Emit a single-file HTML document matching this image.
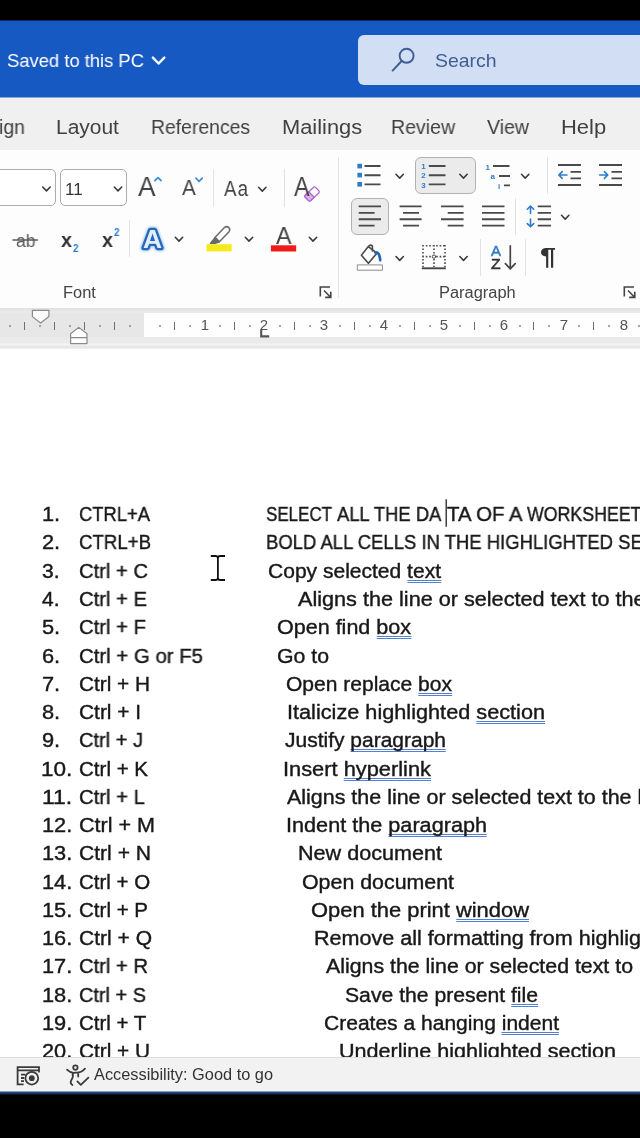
<!DOCTYPE html>
<html lang="en">
<head>
<meta charset="utf-8">
<title>Word shortcuts</title>
<style>
html,body{margin:0;padding:0;background:#000;}
body{width:640px;height:1138px;position:relative;overflow:hidden;font-family:"Liberation Sans",sans-serif;}
.abs{position:absolute;}
.t{position:absolute;white-space:nowrap;transform-origin:0 0;will-change:transform;line-height:1em;font-family:"Liberation Sans",sans-serif;}
#titlebar{position:absolute;left:0;top:20px;width:640px;height:78px;background:#1759c3;}
#search{position:absolute;left:358px;top:35px;width:300px;height:50px;border-radius:6px;background:#d2def4;}
#tabrow{position:absolute;left:0;top:97px;width:640px;height:53px;background:#f0f0f0;}
#ribbon{position:absolute;left:0;top:150px;width:640px;height:158px;background:#fdfdfd;}
#rulerband{position:absolute;left:0;top:308px;width:640px;height:41px;background:linear-gradient(#e0e0e0 0,#eaeaea 4px,#eaeaea 35px,#f4f4f4 36px,#f4f4f4 37px,#e6e6e6 38px,#e8e8e8 40px,#f5f5f5 41px);}
#rulergrey{position:absolute;left:0;top:313px;width:145px;height:24px;background:#e7e7e7;}
#rulerwhite{position:absolute;left:144px;top:313px;width:500px;height:24px;background:#fefefe;}
#doc{position:absolute;left:0;top:349px;width:640px;height:708px;background:#fff;overflow:hidden;}
#doc .t{margin-top:-349px;}
#status{position:absolute;left:0;top:1057px;width:640px;height:34px;background:#f2f2f2;border-top:1px solid #dedede;box-sizing:border-box;}
#statusline{position:absolute;left:0;top:1091px;width:640px;height:4px;background:linear-gradient(#c9d3e6 0,#2a4c8c 30%,#14284f 70%,#050a14);}
u{text-decoration:none;background:linear-gradient(#5580cf,#5580cf) 0 100%/100% 1px no-repeat,linear-gradient(#5580cf,#5580cf) 0 calc(100% - 2px)/100% 1px no-repeat;padding-bottom:1px;}
.sep{position:absolute;width:1px;background:#e2e2e2;}
.box{position:absolute;box-sizing:border-box;border:1px solid #ababab;border-radius:5px;background:#fff;}
.sel{position:absolute;box-sizing:border-box;border:1px solid #b2b2b2;border-radius:6px;background:#ebebeb;}
.rn{position:absolute;top:316px;width:20px;text-align:center;font-size:15px;line-height:18px;color:#555;}
.tk{position:absolute;top:322px;width:1px;height:8px;background:#707070;}
.dt{position:absolute;top:325px;width:2px;height:2px;background:#8a8a8a;border-radius:1px;}
svg{position:absolute;overflow:visible;will-change:transform;}
.rn{will-change:transform;}
</style>
</head>
<body>
<div id="titlebar"></div>
<div id="search"></div>
<div id="tabrow"></div>
<div class="abs" style="left:0;top:20px;width:640px;height:1px;background:#0b2c62"></div>
<div class="abs" style="left:0;top:97px;width:640px;height:1px;background:#86a8dc"></div>
<div id="ribbon"></div>
<div id="rulerband"></div>
<div id="rulergrey"></div>
<div id="rulerwhite"></div>
<i class="dt" style="left:9.3px"></i>
<i class="tk" style="left:24.3px"></i>
<i class="dt" style="left:39.3px"></i>
<i class="tk" style="left:54.2px"></i>
<i class="dt" style="left:69.2px"></i>
<i class="tk" style="left:84.2px"></i>
<i class="dt" style="left:99.2px"></i>
<i class="tk" style="left:114.1px"></i>
<i class="dt" style="left:129.1px"></i>
<i class="dt" style="left:159.1px"></i>
<i class="tk" style="left:174.0px"></i>
<i class="dt" style="left:189.0px"></i>
<span class="rn" style="left:194.5px">1</span>
<i class="dt" style="left:219.0px"></i>
<i class="tk" style="left:233.9px"></i>
<i class="dt" style="left:248.9px"></i>
<span class="rn" style="left:254.4px">2</span>
<i class="dt" style="left:278.9px"></i>
<i class="tk" style="left:293.9px"></i>
<i class="dt" style="left:308.8px"></i>
<span class="rn" style="left:314.3px">3</span>
<i class="dt" style="left:338.8px"></i>
<i class="tk" style="left:353.8px"></i>
<i class="dt" style="left:368.7px"></i>
<span class="rn" style="left:374.2px">4</span>
<i class="dt" style="left:398.7px"></i>
<i class="tk" style="left:413.6px"></i>
<i class="dt" style="left:428.6px"></i>
<span class="rn" style="left:434.1px">5</span>
<i class="dt" style="left:458.6px"></i>
<i class="tk" style="left:473.5px"></i>
<i class="dt" style="left:488.5px"></i>
<span class="rn" style="left:494.0px">6</span>
<i class="dt" style="left:518.5px"></i>
<i class="tk" style="left:533.4px"></i>
<i class="dt" style="left:548.4px"></i>
<span class="rn" style="left:553.9px">7</span>
<i class="dt" style="left:578.4px"></i>
<i class="tk" style="left:593.4px"></i>
<i class="dt" style="left:608.3px"></i>
<span class="rn" style="left:613.8px">8</span>
<i class="dt" style="left:638.3px"></i>
<div id="doc">
<span id="n0" class="t" style="left:41.66px;top:504.15px;font-size:20.5px;color:#181818;transform:scaleX(1.0633);-webkit-text-stroke:0.4px #181818;">1.</span>
<span id="k0" class="t" style="left:78.99px;top:504.15px;font-size:20.5px;color:#181818;transform:scaleX(0.8968);-webkit-text-stroke:0.4px #181818;">CTRL+A</span>
<span id="d0s0" class="t" style="left:265.97px;top:504.15px;font-size:20.5px;color:#181818;transform:scaleX(0.8278);-webkit-text-stroke:0.4px #181818;">SELECT</span>
<span id="d0s1" class="t" style="left:337.02px;top:504.15px;font-size:20.5px;color:#181818;transform:scaleX(0.8983);-webkit-text-stroke:0.4px #181818;">ALL THE DA</span>
<span id="d0s2" class="t" style="left:447.48px;top:504.15px;font-size:20.5px;color:#181818;transform:scaleX(0.9946);-webkit-text-stroke:0.4px #181818;">TA OF A</span>
<span id="d0s3" class="t" style="left:527.00px;top:504.15px;font-size:20.5px;color:#181818;transform:scaleX(0.8666);-webkit-text-stroke:0.4px #181818;">WORKSHEET</span>
<span id="n1" class="t" style="left:41.66px;top:532.42px;font-size:20.5px;color:#181818;transform:scaleX(1.0633);-webkit-text-stroke:0.4px #181818;">2.</span>
<span id="k1" class="t" style="left:78.97px;top:532.42px;font-size:20.5px;color:#181818;transform:scaleX(0.9100);-webkit-text-stroke:0.4px #181818;">CTRL+B</span>
<span id="d1" class="t" style="left:266.00px;top:532.42px;font-size:20.5px;color:#181818;transform:scaleX(0.9011);-webkit-text-stroke:0.4px #181818;">BOLD ALL CELLS IN THE HIGHLIGHTED SECTION</span>
<span id="n2" class="t" style="left:41.79px;top:560.69px;font-size:20.5px;color:#181818;transform:scaleX(1.0247);-webkit-text-stroke:0.4px #181818;">3.</span>
<span id="k2" class="t" style="left:78.98px;top:560.69px;font-size:20.5px;color:#181818;transform:scaleX(0.9855);-webkit-text-stroke:0.4px #181818;">Ctrl + C</span>
<span id="d2" class="t" style="left:268.00px;top:560.69px;font-size:20.5px;color:#181818;transform:scaleX(1.0258);-webkit-text-stroke:0.4px #181818;">Copy selected <u>text</u></span>
<span id="n3" class="t" style="left:41.79px;top:588.96px;font-size:20.5px;color:#181818;transform:scaleX(1.0247);-webkit-text-stroke:0.4px #181818;">4.</span>
<span id="k3" class="t" style="left:78.97px;top:588.96px;font-size:20.5px;color:#181818;transform:scaleX(0.9875);-webkit-text-stroke:0.4px #181818;">Ctrl + E</span>
<span id="d3" class="t" style="left:298.00px;top:588.96px;font-size:20.5px;color:#181818;transform:scaleX(1.0554);-webkit-text-stroke:0.4px #181818;">Aligns the line or selected text to the center</span>
<span id="n4" class="t" style="left:41.66px;top:617.23px;font-size:20.5px;color:#181818;transform:scaleX(1.0633);-webkit-text-stroke:0.4px #181818;">5.</span>
<span id="k4" class="t" style="left:78.98px;top:617.23px;font-size:20.5px;color:#181818;transform:scaleX(0.9889);-webkit-text-stroke:0.4px #181818;">Ctrl + F</span>
<span id="d4" class="t" style="left:276.98px;top:617.23px;font-size:20.5px;color:#181818;transform:scaleX(1.0500);-webkit-text-stroke:0.4px #181818;">Open find <u>box</u></span>
<span id="n5" class="t" style="left:41.66px;top:645.50px;font-size:20.5px;color:#181818;transform:scaleX(1.0633);-webkit-text-stroke:0.4px #181818;">6.</span>
<span id="k5" class="t" style="left:78.99px;top:645.50px;font-size:20.5px;color:#181818;transform:scaleX(0.9943);-webkit-text-stroke:0.4px #181818;">Ctrl + G or F5</span>
<span id="d5" class="t" style="left:276.97px;top:645.50px;font-size:20.5px;color:#181818;transform:scaleX(1.0374);-webkit-text-stroke:0.4px #181818;">Go to</span>
<span id="n6" class="t" style="left:41.66px;top:673.77px;font-size:20.5px;color:#181818;transform:scaleX(1.0633);-webkit-text-stroke:0.4px #181818;">7.</span>
<span id="k6" class="t" style="left:78.96px;top:673.77px;font-size:20.5px;color:#181818;transform:scaleX(1.0144);-webkit-text-stroke:0.4px #181818;">Ctrl + H</span>
<span id="d6" class="t" style="left:285.99px;top:673.77px;font-size:20.5px;color:#181818;transform:scaleX(1.0257);-webkit-text-stroke:0.4px #181818;">Open replace <u>box</u></span>
<span id="n7" class="t" style="left:41.66px;top:702.04px;font-size:20.5px;color:#181818;transform:scaleX(1.0633);-webkit-text-stroke:0.4px #181818;">8.</span>
<span id="k7" class="t" style="left:78.97px;top:702.04px;font-size:20.5px;color:#181818;transform:scaleX(1.0183);-webkit-text-stroke:0.4px #181818;">Ctrl + I</span>
<span id="d7" class="t" style="left:286.97px;top:702.04px;font-size:20.5px;color:#181818;transform:scaleX(1.0580);-webkit-text-stroke:0.4px #181818;">Italicize highlighted <u>section</u></span>
<span id="n8" class="t" style="left:41.66px;top:730.31px;font-size:20.5px;color:#181818;transform:scaleX(1.0633);-webkit-text-stroke:0.4px #181818;">9.</span>
<span id="k8" class="t" style="left:78.97px;top:730.31px;font-size:20.5px;color:#181818;transform:scaleX(0.9782);-webkit-text-stroke:0.4px #181818;">Ctrl + J</span>
<span id="d8" class="t" style="left:285.00px;top:730.31px;font-size:20.5px;color:#181818;transform:scaleX(1.0238);-webkit-text-stroke:0.4px #181818;">Justify <u>paragraph</u></span>
<span id="n9" class="t" style="left:40.57px;top:758.58px;font-size:20.5px;color:#181818;transform:scaleX(1.1012);-webkit-text-stroke:0.4px #181818;">10.</span>
<span id="k9" class="t" style="left:78.97px;top:758.58px;font-size:20.5px;color:#181818;transform:scaleX(1.0020);-webkit-text-stroke:0.4px #181818;">Ctrl + K</span>
<span id="d9" class="t" style="left:282.97px;top:758.58px;font-size:20.5px;color:#181818;transform:scaleX(1.0648);-webkit-text-stroke:0.4px #181818;">Insert <u>hyperlink</u></span>
<span id="n10" class="t" style="left:41.74px;top:786.85px;font-size:20.5px;color:#181818;transform:scaleX(1.1217);-webkit-text-stroke:0.4px #181818;">11.</span>
<span id="k10" class="t" style="left:78.98px;top:786.85px;font-size:20.5px;color:#181818;transform:scaleX(0.9904);-webkit-text-stroke:0.4px #181818;">Ctrl + L</span>
<span id="d10" class="t" style="left:287.00px;top:786.85px;font-size:20.5px;color:#181818;transform:scaleX(1.0460);-webkit-text-stroke:0.4px #181818;">Aligns the line or selected text to the left</span>
<span id="n11" class="t" style="left:41.74px;top:815.12px;font-size:20.5px;color:#181818;transform:scaleX(1.0619);-webkit-text-stroke:0.4px #181818;">12.</span>
<span id="k11" class="t" style="left:78.97px;top:815.12px;font-size:20.5px;color:#181818;transform:scaleX(1.0515);-webkit-text-stroke:0.4px #181818;">Ctrl + M</span>
<span id="d11" class="t" style="left:285.96px;top:815.12px;font-size:20.5px;color:#181818;transform:scaleX(1.0561);-webkit-text-stroke:0.4px #181818;">Indent the <u>paragraph</u></span>
<span id="n12" class="t" style="left:41.74px;top:843.39px;font-size:20.5px;color:#181818;transform:scaleX(1.0619);-webkit-text-stroke:0.4px #181818;">13.</span>
<span id="k12" class="t" style="left:78.96px;top:843.39px;font-size:20.5px;color:#181818;transform:scaleX(1.0287);-webkit-text-stroke:0.4px #181818;">Ctrl + N</span>
<span id="d12" class="t" style="left:297.99px;top:843.39px;font-size:20.5px;color:#181818;transform:scaleX(1.0532);-webkit-text-stroke:0.4px #181818;">New document</span>
<span id="n13" class="t" style="left:41.74px;top:871.66px;font-size:20.5px;color:#181818;transform:scaleX(1.0619);-webkit-text-stroke:0.4px #181818;">14.</span>
<span id="k13" class="t" style="left:78.99px;top:871.66px;font-size:20.5px;color:#181818;transform:scaleX(0.9973);-webkit-text-stroke:0.4px #181818;">Ctrl + O</span>
<span id="d13" class="t" style="left:302.00px;top:871.66px;font-size:20.5px;color:#181818;transform:scaleX(1.0422);-webkit-text-stroke:0.4px #181818;">Open document</span>
<span id="n14" class="t" style="left:41.74px;top:899.93px;font-size:20.5px;color:#181818;transform:scaleX(1.0619);-webkit-text-stroke:0.4px #181818;">15.</span>
<span id="k14" class="t" style="left:78.97px;top:899.93px;font-size:20.5px;color:#181818;transform:scaleX(1.0020);-webkit-text-stroke:0.4px #181818;">Ctrl + P</span>
<span id="d14" class="t" style="left:310.99px;top:899.93px;font-size:20.5px;color:#181818;transform:scaleX(1.0686);-webkit-text-stroke:0.4px #181818;">Open the print <u>window</u></span>
<span id="n15" class="t" style="left:41.74px;top:928.20px;font-size:20.5px;color:#181818;transform:scaleX(1.0619);-webkit-text-stroke:0.4px #181818;">16.</span>
<span id="k15" class="t" style="left:78.98px;top:928.20px;font-size:20.5px;color:#181818;transform:scaleX(1.0257);-webkit-text-stroke:0.4px #181818;">Ctrl + Q</span>
<span id="d15" class="t" style="left:314.00px;top:928.20px;font-size:20.5px;color:#181818;transform:scaleX(1.0514);-webkit-text-stroke:0.4px #181818;">Remove all formatting from highlighted</span>
<span id="n16" class="t" style="left:41.74px;top:956.47px;font-size:20.5px;color:#181818;transform:scaleX(1.0619);-webkit-text-stroke:0.4px #181818;">17.</span>
<span id="k16" class="t" style="left:78.98px;top:956.47px;font-size:20.5px;color:#181818;transform:scaleX(0.9855);-webkit-text-stroke:0.4px #181818;">Ctrl + R</span>
<span id="d16" class="t" style="left:326.00px;top:956.47px;font-size:20.5px;color:#181818;transform:scaleX(1.0402);-webkit-text-stroke:0.4px #181818;">Aligns the line or selected text to</span>
<span id="n17" class="t" style="left:41.74px;top:984.74px;font-size:20.5px;color:#181818;transform:scaleX(1.0619);-webkit-text-stroke:0.4px #181818;">18.</span>
<span id="k17" class="t" style="left:78.97px;top:984.74px;font-size:20.5px;color:#181818;transform:scaleX(0.9730);-webkit-text-stroke:0.4px #181818;">Ctrl + S</span>
<span id="d17" class="t" style="left:344.99px;top:984.74px;font-size:20.5px;color:#181818;transform:scaleX(1.0327);-webkit-text-stroke:0.4px #181818;">Save the present <u>file</u></span>
<span id="n18" class="t" style="left:41.74px;top:1013.01px;font-size:20.5px;color:#181818;transform:scaleX(1.0619);-webkit-text-stroke:0.4px #181818;">19.</span>
<span id="k18" class="t" style="left:78.98px;top:1013.01px;font-size:20.5px;color:#181818;transform:scaleX(0.9942);-webkit-text-stroke:0.4px #181818;">Ctrl + T</span>
<span id="d18" class="t" style="left:324.00px;top:1013.01px;font-size:20.5px;color:#181818;transform:scaleX(1.0258);-webkit-text-stroke:0.4px #181818;">Creates a hanging <u>indent</u></span>
<span id="n19" class="t" style="left:41.74px;top:1041.28px;font-size:20.5px;color:#181818;transform:scaleX(1.0619);-webkit-text-stroke:0.4px #181818;">20.</span>
<span id="k19" class="t" style="left:78.97px;top:1041.28px;font-size:20.5px;color:#181818;transform:scaleX(1.0142);-webkit-text-stroke:0.4px #181818;">Ctrl + U</span>
<span id="d19" class="t" style="left:338.99px;top:1041.28px;font-size:20.5px;color:#181818;transform:scaleX(1.0523);-webkit-text-stroke:0.4px #181818;">Underline highlighted section</span>
</div>
<div id="status"></div>
<div id="statusline"></div>
<div class="box" style="left:-10px;top:169px;width:66px;height:37px;"></div>
<div class="box" style="left:60px;top:169px;width:67px;height:37px;"></div>
<div class="sel" style="left:415px;top:156.5px;width:61px;height:37.5px;"></div>
<div class="sel" style="left:351px;top:197.5px;width:37.5px;height:37.5px;"></div>
<div class="sep" style="left:213px;top:169px;height:38px;"></div>
<div class="sep" style="left:284px;top:169px;height:38px;"></div>
<div class="sep" style="left:129px;top:220px;height:37px;"></div>
<div class="sep" style="left:338px;top:157px;height:141px;"></div>
<div class="sep" style="left:547px;top:157px;height:37px;"></div>
<div class="sep" style="left:515px;top:198px;height:37px;"></div>
<div class="sep" style="left:480px;top:239px;height:37px;"></div>
<div class="sep" style="left:525px;top:239px;height:37px;"></div>
<svg id="ov" width="640" height="1138" viewBox="0 0 640 1138" style="left:0;top:0;pointer-events:none" fill="none" stroke-linecap="round" stroke-linejoin="round">
<defs>
<path id="chv" d="M-3.7 -2 L0 1.9 L3.7 -2" stroke-width="1.55"/>
<path id="chvb" d="M-5.7 -3 L0 2.9 L5.7 -3" stroke-width="2.5"/>
</defs>
<!-- title bar -->
<use href="#chvb" x="158.6" y="60.6" stroke="#f2f7ff"/>
<g stroke="#3f5d93" stroke-width="1.9"><circle cx="406.6" cy="55.8" r="7"/><path d="M401.6 61 L392.6 70.6"/></g>
<!-- font row 1 -->
<g stroke="#3a3a3a">
<use href="#chv" x="46.5" y="189"/>
<use href="#chv" x="118" y="189"/>
<use href="#chv" x="262.3" y="189.2"/>
<use href="#chv" x="179" y="239.2"/>
<use href="#chv" x="249" y="239.2"/>
<use href="#chv" x="313" y="239.2"/>
<use href="#chv" x="399.7" y="176.2"/>
<use href="#chv" x="463.5" y="176.2"/>
<use href="#chv" x="525.2" y="176.2"/>
<use href="#chv" x="565.2" y="217.2"/>
<use href="#chv" x="399.7" y="258.5"/>
<use href="#chv" x="463.5" y="258.5"/>
</g>
<!-- grow/shrink carets -->
<path d="M154.9 180.6 L158 177.6 L161.1 180.6" stroke="#3d8ad6" stroke-width="1.7"/>
<path d="M195.9 178.2 L199.1 181.3 L202.3 178.2" stroke="#3d8ad6" stroke-width="1.7"/>
<!-- eraser -->
<g stroke="#b068cc" stroke-width="1.3"><path d="M305 195.4 L313.6 187.2 Q314.6 186.4 315.6 187.4 L319 191 Q319.8 192 318.8 193 L310.4 200.8 Q309.4 201.4 308.6 200.6 L305 197 Q304.2 196.2 305 195.4 Z" fill="#fff"/><path d="M305 195.4 L308.8 191.8 L314.2 197.2 L310.4 200.8 Q309.4 201.4 308.6 200.6 L305 197 Q304.2 196.2 305 195.4 Z" fill="#dcb2ea"/></g>
<!-- text effects A -->
<g font-family="Liberation Sans, sans-serif" font-size="25.8" font-weight="bold" stroke-linejoin="round">
<text x="143" y="248.3" textLength="19.1" lengthAdjust="spacingAndGlyphs" fill="#8fbcf0" stroke="#8fbcf0" stroke-width="6.6" style="filter:blur(1.1px)" opacity="0.75">A</text>
<text x="143" y="248.3" textLength="19.1" lengthAdjust="spacingAndGlyphs" fill="#e4eefa" stroke="#2469bb" stroke-width="4.6" paint-order="stroke">A</text>
</g>
<!-- strike -->
<path d="M13 240 H37.5" stroke="#5a5a5a" stroke-width="1.4"/>
<!-- highlighter -->
<g stroke="#6a6a6a" stroke-width="1.5"><path d="M215 237.6 L224.4 227.6 Q226.6 225.6 228.8 227.6 Q230.8 229.8 228.8 232 L219.4 241.8 Z" fill="#fff"/><path d="M215 237.6 L219.4 241.8 L214.6 243.6 L210.4 243.4 Z" fill="#6a6a6a"/></g>
<rect x="206.5" y="244.2" width="25.2" height="7.2" fill="#f6ea1e"/>
<!-- font colour bar -->
<rect x="270.9" y="245.3" width="25.3" height="6.2" fill="#ee1c18"/>
<!-- launchers -->
<g stroke="#444" stroke-width="1.6" stroke-linecap="butt" stroke-linejoin="miter"><path d="M320.3 296.5 V287 H330"/><path d="M324 290.5 L330.6 297.2 M330.8 291.8 V297.4 H325.2"/></g>
<g stroke="#444" stroke-width="1.6" stroke-linecap="butt" stroke-linejoin="miter"><path d="M624.3 296.5 V287 H634"/><path d="M628 290.5 L634.6 297.2 M634.8 291.8 V297.4 H629.2"/></g>
<!-- bullets -->
<g fill="#2e7bcb"><rect x="357.4" y="163.8" width="4.6" height="4.6"/><rect x="357.4" y="172.8" width="4.6" height="4.6"/><rect x="357.4" y="182" width="4.6" height="4.6"/></g>
<g stroke="#4a4a4a" stroke-width="1.85" stroke-linecap="butt"><path d="M364.5 166 H380.5 M364.5 175.2 H380.5 M364.5 184.4 H380.5"/>
<!-- numbering -->
<path d="M428.8 166 H445.5 M428.8 175.2 H445.5 M428.8 184.4 H445.5"/>
<!-- multilevel -->
<path d="M493 166 H509.5 M499 176 H510 M504 185.4 H510"/>
<!-- decrease / increase indent -->
<path d="M558 165 H581 M570.5 171.8 H581 M570.5 178.4 H581 M558 185 H581"/>
<path d="M599 165 H622 M611.5 171.8 H622 M611.5 178.4 H622 M599 185 H622"/>
<!-- align left/center/right/justify -->
<path d="M358.7 206.3 H381 M358.7 212.8 H374.6 M358.7 219.2 H381 M358.7 225.6 H374.6"/>
<path d="M399.6 206.3 H421.6 M403 212.8 H419 M399.6 219.2 H421.6 M403 225.6 H419"/>
<path d="M441 206.3 H463.6 M447.7 212.8 H463.6 M441 219.2 H463.6 M447.7 225.6 H463.6"/>
<path d="M482 206.3 H504.5 M482 212.8 H504.5 M482 219.2 H504.5 M482 225.6 H504.5"/>
<!-- line spacing lines -->
<path d="M537.7 206.3 H551 M537.7 212.8 H551 M537.7 219.2 H551 M537.7 225.6 H551"/>
</g>
<g fill="#2e7bcb" stroke="none" font-family="Liberation Sans, sans-serif" font-size="8" font-weight="bold">
<text x="421.3" y="169">1</text><text x="421.3" y="178.3">2</text><text x="421.3" y="187.6">3</text>
<text x="485.6" y="169.5">1</text><text x="490.6" y="179.3">a</text><text x="498" y="188.6">i</text>
</g>
<g stroke="#2e7bcb" stroke-width="1.6">
<path d="M567 175 H559 M562.2 171.6 L558.8 175 L562.2 178.4"/>
<path d="M599.6 175 H607.6 M604.4 171.6 L607.8 175 L604.4 178.4"/>
<path d="M530.5 206.2 V213.5 M527.3 209.2 L530.5 206 L533.7 209.2"/>
<path d="M530.5 226.6 V219 M527.3 223.6 L530.5 226.8 L533.7 223.6"/>
</g>
<!-- paint bucket -->
<g stroke="#4a4a4a" stroke-width="1.6"><path d="M361.4 255.2 L368.3 246.6 L376.9 253.2 L368.4 263.3 Z" fill="#fff"/><path d="M368.9 246 Q370.8 244.2 372.4 246 V251"/></g>
<path d="M375.2 252.4 Q379.6 251.6 380.2 260.2" stroke="#2366b4" stroke-width="2.7"/>
<rect x="357.7" y="264.9" width="24.7" height="5.3" fill="#fff" stroke="#8c8c8c" stroke-width="1"/>
<!-- borders -->
<g stroke="#4a4a4a" stroke-width="1.6" stroke-dasharray="1.6 1.87" stroke-linecap="butt"><path d="M422.3 245.8 H445.6 M423 245 V267 M445 245 V267 M434 245 V267 M422.3 256.6 H445.6"/></g>
<path d="M421.8 268.3 H445.8" stroke="#444" stroke-width="1.9" stroke-linecap="butt"/>
<circle cx="434" cy="256.6" r="1.7" stroke="#4a4a4a" stroke-width="1" fill="#fff"/>
<!-- sort arrow -->
<path d="M510.3 245.8 V268.6 M505.4 263.6 L510.3 268.8 L515.2 263.6" stroke="#444" stroke-width="1.7"/>
<!-- ruler markers -->
<g stroke="#8a8a8a" stroke-width="1.2" fill="#fdfdfd">
<path d="M32.4 310.4 H48.9 V316.6 L40.6 323 L32.4 316.6 Z"/>
<path d="M70.6 333.8 L78.8 327.4 L87 333.8 V343.6 H70.6 Z M70.6 337.6 H87"/>
</g>
<path d="M261.2 329.6 V336.4 H269.2" stroke="#555" stroke-width="2.1" stroke-linecap="butt" stroke-linejoin="miter"/>
<!-- caret + I-beam -->
<path d="M446.2 499.2 V526.8" stroke="#222" stroke-width="1.3" stroke-linecap="butt"/>
<path d="M210.8 556 H215.4 Q217.9 556 217.9 558 Q217.9 556 220.4 556 H225 M217.9 557.2 V578.8 M210.8 580 H215.4 Q217.9 580 217.9 578 Q217.9 580 220.4 580 H225" stroke="#111" stroke-width="1.8" stroke-linecap="butt"/>
<!-- status icons -->
<g stroke="#3a3a3a" stroke-width="1.8" stroke-linecap="butt" stroke-linejoin="miter"><path d="M17.6 1067.2 H39 M17.6 1070.4 H39 M17.6 1066.3 V1084.4 H23.6 M39 1066.3 V1072.4 M21 1074.6 H25.6 M21 1078 H24.2 M21 1081.2 H24"/><circle cx="31.8" cy="1078.2" r="6.4" fill="#f0f0f0"/><circle cx="31.8" cy="1078.2" r="2.9" fill="#3a3a3a" stroke="none"/></g>
<g stroke="#3a3a3a" stroke-width="1.8"><circle cx="75.4" cy="1067.6" r="2.2"/><path d="M67 1069.6 Q71 1073.6 75.4 1072.6 Q80.4 1073.4 85 1068.6 M72.6 1073 Q73.6 1077 71.4 1080 Q69.6 1083.4 72.4 1085 M78.2 1072.8 V1076.6"/><path d="M77.4 1081.4 L80.8 1084.8 L88.4 1077.6"/></g>
</svg>

<span id="t_saved" class="t" style="left:6.98px;top:51.42px;font-size:19px;color:#ffffff;transform:scaleX(0.9682);">Saved to this PC</span>
<span id="t_search" class="t" style="left:435.18px;top:51.42px;font-size:19px;color:#3f5d93;transform:scaleX(1.0242);">Search</span>
<span id="tab0" class="t" style="left:-1.00px;top:116.87px;font-size:20px;color:#404040;transform:scaleX(0.9737);">ign</span>
<span id="tab1" class="t" style="left:55.94px;top:116.87px;font-size:20px;color:#404040;transform:scaleX(1.0467);">Layout</span>
<span id="tab2" class="t" style="left:150.96px;top:116.87px;font-size:20px;color:#404040;transform:scaleX(0.9684);">References</span>
<span id="tab3" class="t" style="left:281.92px;top:116.87px;font-size:20px;color:#404040;transform:scaleX(1.0922);">Mailings</span>
<span id="tab4" class="t" style="left:390.94px;top:116.87px;font-size:20px;color:#404040;transform:scaleX(0.9767);">Review</span>
<span id="tab5" class="t" style="left:487.03px;top:116.87px;font-size:20px;color:#404040;transform:scaleX(0.9771);">View</span>
<span id="tab6" class="t" style="left:560.82px;top:116.87px;font-size:20px;color:#404040;transform:scaleX(1.0980);">Help</span>
<span id="t_11" class="t" style="left:65.00px;top:180.61px;font-size:17px;color:#333;transform:scaleX(1.0000);">11</span>
<span id="ic_A1" class="t" style="left:138.10px;top:172.60px;font-size:28px;color:#444;transform:scaleX(0.9365);">A</span>
<span id="ic_A2" class="t" style="left:181.90px;top:177.42px;font-size:22.3px;color:#444;transform:scaleX(0.9277);">A</span>
<span id="ic_Aa" class="t" style="left:224.00px;top:177.52px;font-size:22.3px;color:#444;transform:scaleX(0.8388);letter-spacing:1.5px;">Aa</span>
<span id="ic_A3" class="t" style="left:294.40px;top:172.70px;font-size:28px;color:#444;transform:scaleX(0.8348);">A</span>
<span id="ic_ab" class="t" style="left:15.50px;top:231.76px;font-size:18px;color:#5a5a5a;transform:scaleX(0.9735);">ab</span>
<span id="ic_x1" class="t" style="left:61.00px;top:229.22px;font-size:21px;color:#333;transform:scaleX(0.9412);font-weight:bold;">x</span>
<span id="ic_2a" class="t" style="left:73.00px;top:243.19px;font-size:11px;color:#2e7bcb;transform:scaleX(0.8980);font-weight:bold;">2</span>
<span id="ic_x2" class="t" style="left:102.00px;top:229.22px;font-size:21px;color:#333;transform:scaleX(0.9412);font-weight:bold;">x</span>
<span id="ic_2b" class="t" style="left:114.00px;top:226.69px;font-size:11px;color:#2e7bcb;transform:scaleX(0.8980);font-weight:bold;">2</span>
<span id="ic_A5" class="t" style="left:276.00px;top:223.68px;font-size:24px;color:#444;transform:scaleX(0.9678);">A</span>
<span id="ic_sA" class="t" style="left:491.00px;top:243.73px;font-size:14.5px;color:#2e7bcb;transform:scaleX(1.0339);-webkit-text-stroke:0.5px #2e7bcb;">A</span>
<span id="ic_sZ" class="t" style="left:491.00px;top:257.23px;font-size:14.5px;color:#333;transform:scaleX(1.0836);-webkit-text-stroke:0.5px #333;">Z</span>
<span id="ic_pil" class="t" style="left:540.00px;top:245.18px;font-size:24px;color:#333;transform:scaleX(1.1977);font-weight:bold;">¶</span>
<span id="t_font" class="t" style="left:62.82px;top:285.23px;font-size:15.8px;color:#444;transform:scaleX(1.0390);">Font</span>
<span id="t_para" class="t" style="left:438.96px;top:285.23px;font-size:15.8px;color:#444;transform:scaleX(1.0398);">Paragraph</span>
<span id="t_acc" class="t" style="left:93.61px;top:1067.26px;font-size:16px;color:#333;transform:scaleX(1.0217);">Accessibility: Good to go</span>
</body>
</html>
